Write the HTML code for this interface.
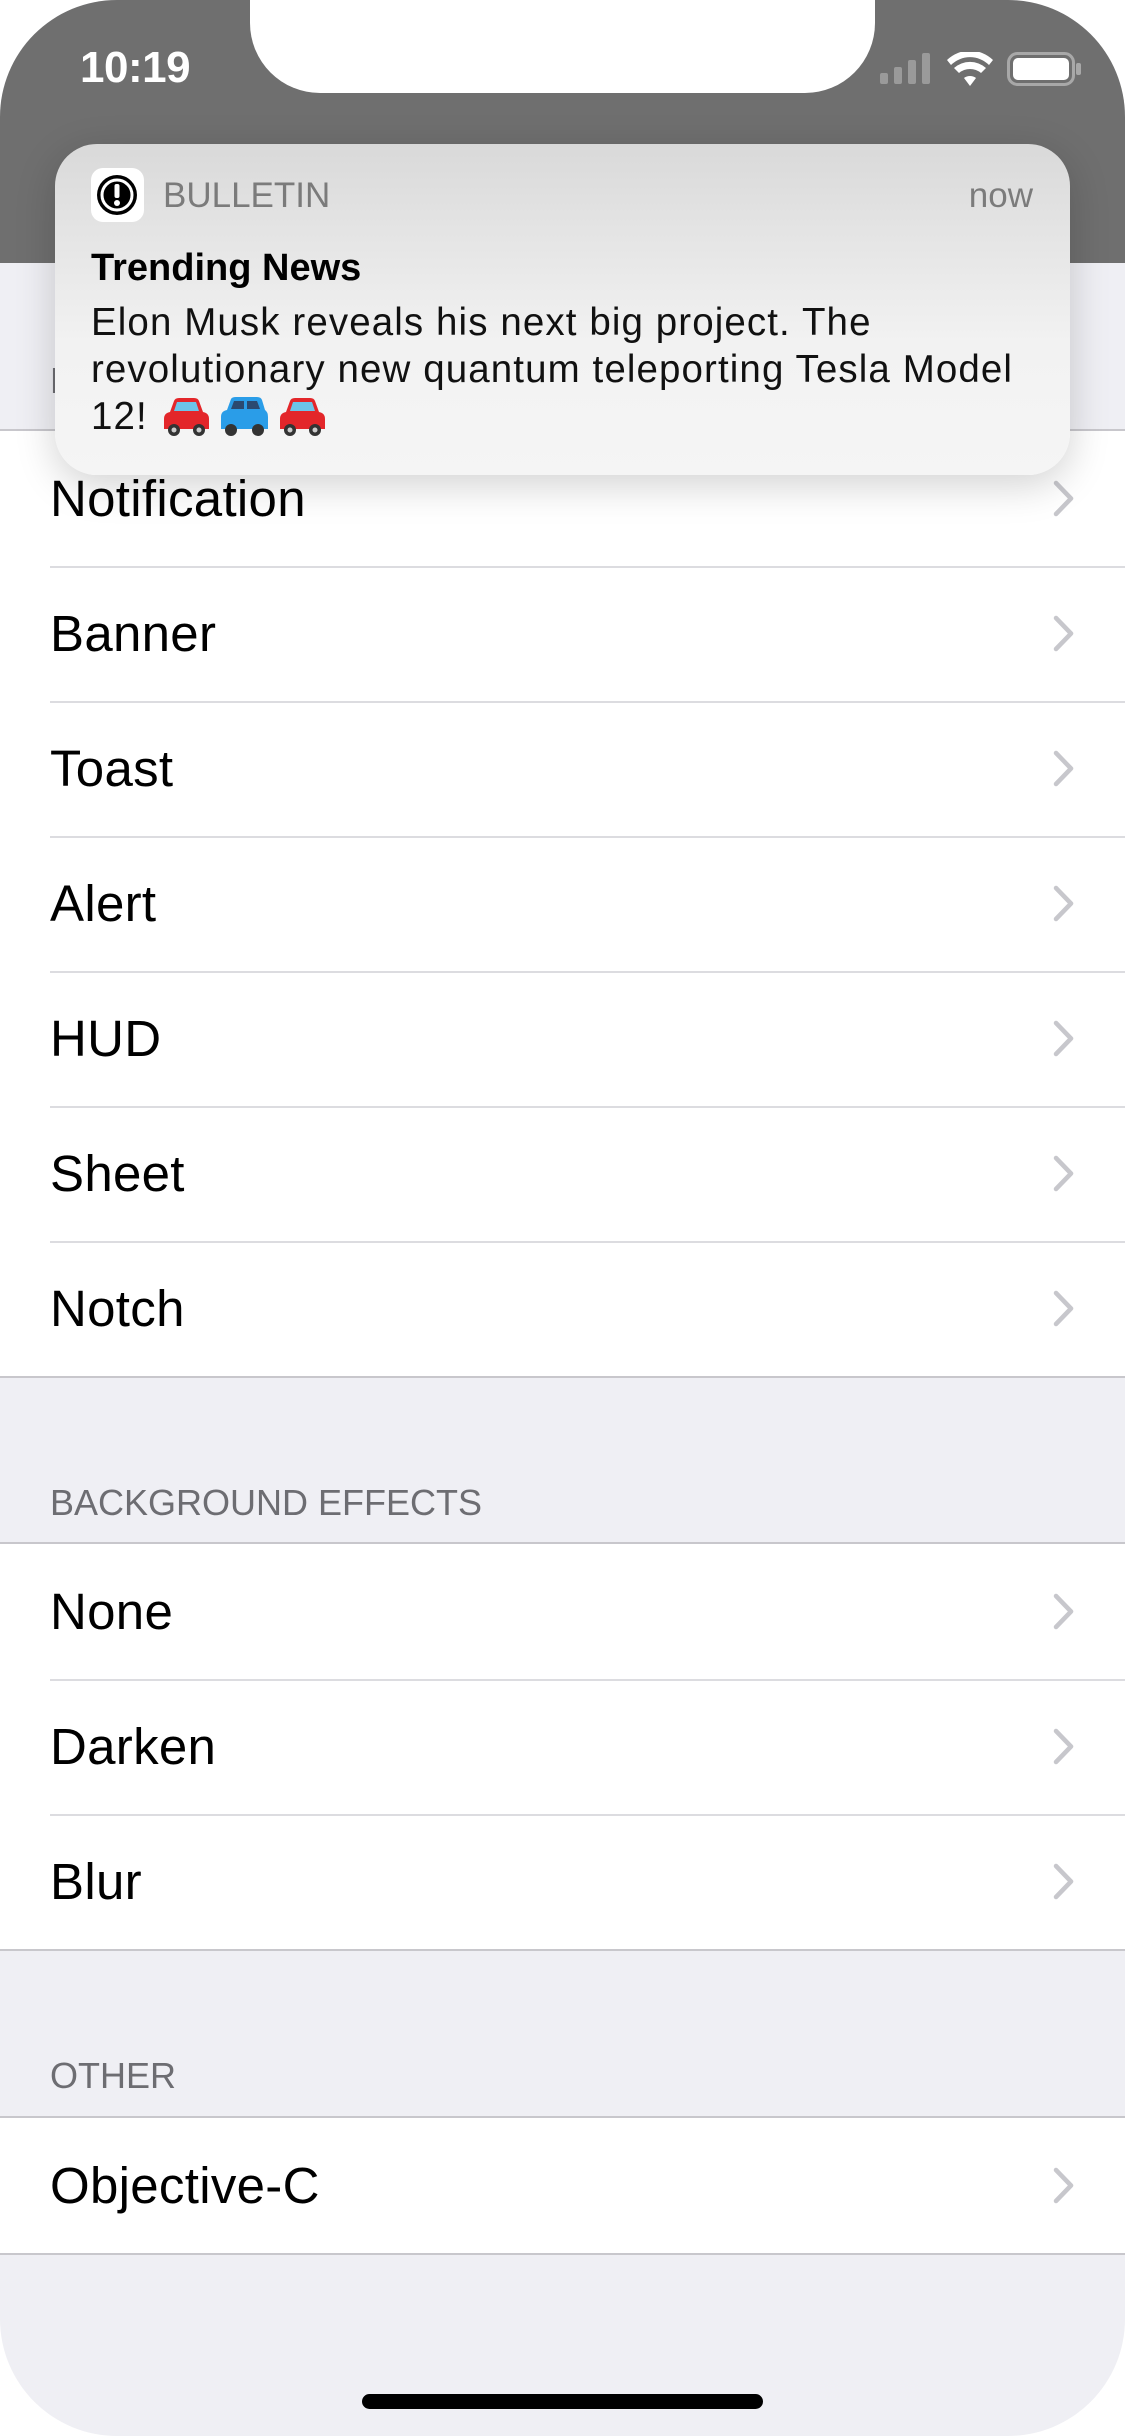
<!DOCTYPE html>
<html><head><meta charset="utf-8"><style>
*{margin:0;padding:0;box-sizing:border-box}
body{width:1125px;height:2436px;background:#fff;font-family:"Liberation Sans",sans-serif;overflow:hidden}
#s{position:absolute;left:0;top:0;width:1125px;height:2436px;border-radius:117px;overflow:hidden;background:#efeff4}
#hdr{position:absolute;left:0;top:0;width:1125px;height:263px;background:#6f6f6f}
#notch{position:absolute;left:250px;top:-2px;width:625px;height:95px;background:#fff;border-radius:0 0 70px 70px}
.time{position:absolute;left:80px;top:43px;color:#fff;font-size:44px;font-weight:bold;letter-spacing:-0.5px}
.grp{position:absolute;left:0;width:1125px;background:#fff;border-top:2px solid #c8c7cc;border-bottom:2px solid #c8c7cc}
.row{height:135px;position:relative;font-size:51px;color:#000;line-height:135px;padding-left:50px;letter-spacing:0.3px}
.row+.row:before{content:"";position:absolute;left:50px;right:0;top:0;border-top:2px solid #dcdce0}
.row svg{position:absolute;right:50px;top:49px}
.sh{position:absolute;left:50px;font-size:36px;color:#6d6d72}
#ban{position:absolute;left:55px;top:144px;width:1015px;height:331px;border-radius:42px;background:linear-gradient(#d9d9d9,#f2f2f2 60%,#f5f5f5);box-shadow:0 10px 40px rgba(0,0,0,.18)}
.body{position:absolute;left:36px;top:155px;width:980px;font-size:38.5px;line-height:47px;color:#111;white-space:nowrap;letter-spacing:1.1px}
</style></head><body><div id="s">
<div id="hdr"></div>
<div id="notch"></div>
<div class="time">10:19</div>
<svg style="position:absolute;left:880px;top:52px" width="52" height="32"><rect x="0" y="21" width="8" height="11" rx="2" fill="#9a9a9a"/><rect x="14" y="15" width="8" height="17" rx="2" fill="#9a9a9a"/><rect x="28" y="8" width="8" height="24" rx="2" fill="#9a9a9a"/><rect x="42" y="1" width="8" height="31" rx="2" fill="#9a9a9a"/></svg>
<svg style="position:absolute;left:946px;top:52px" width="48" height="34" viewBox="0 0 48 34"><path d="M24 34 L18 26 A10 10 0 0 1 30 26Z" fill="#fff"/><path d="M8 16 A24 24 0 0 1 40 16 L35 21 A17 17 0 0 0 13 21Z" fill="#fff"/><path d="M1 8 A33 33 0 0 1 47 8 L43 13 A27 27 0 0 0 5 13Z" fill="#fff"/></svg>
<svg style="position:absolute;left:1007px;top:52px" width="76" height="34"><rect x="1.5" y="1.5" width="65" height="31" rx="9" fill="none" stroke="#a8a8a8" stroke-width="3"/><rect x="6" y="6" width="56" height="22" rx="5" fill="#fff"/><rect x="69" y="11" width="5" height="12" rx="2" fill="#a8a8a8"/></svg>
<div class="sh" style="top:360px">PRESENTATION</div>
<div class="grp" style="top:429px">
<div class="row">Notification</div><div class="row">Banner</div><div class="row">Toast</div><div class="row">Alert</div><div class="row">HUD</div><div class="row">Sheet</div><div class="row">Notch</div>
</div>
<div class="sh" style="top:1482px">BACKGROUND EFFECTS</div>
<div class="grp" style="top:1542px">
<div class="row">None</div><div class="row">Darken</div><div class="row">Blur</div>
</div>
<div class="sh" style="top:2055px">OTHER</div>
<div class="grp" style="top:2116px">
<div class="row">Objective-C</div>
</div>
<div id="ban">
<div style="position:absolute;left:36px;top:24px;width:53px;height:54px;background:#fff;border-radius:12px"><svg width="53" height="54"><circle cx="26" cy="27" r="20" fill="#000"/><circle cx="26" cy="27" r="15" fill="none" stroke="#fff" stroke-width="3"/><rect x="23.5" y="16" width="5" height="14" rx="2" fill="#fff"/><circle cx="26" cy="35" r="3" fill="#fff"/></svg></div>
<div style="position:absolute;left:108px;top:32px;font-size:35px;color:#7b7b7b">BULLETIN</div>
<div style="position:absolute;right:37px;top:32px;font-size:35px;color:#7b7b7b">now</div>
<div style="position:absolute;left:36px;top:103px;font-size:38px;font-weight:bold;color:#000">Trending News</div>
<div class="body">Elon Musk reveals his next big project. The<br>revolutionary new quantum teleporting Tesla Model<br>12! <svg width="170" height="42" style="vertical-align:-8px">
<g id="c"><path d="M4 34 L4 24 Q4 18 10 17 L14 6 Q15 3 19 3 L34 3 Q38 3 39 6 L43 17 Q49 18 49 24 L49 34Z" fill="#e3262a"/><path d="M17 7 L36 7 L39 16 L14 16Z" fill="#6cc4e8"/><circle cx="14" cy="35" r="6" fill="#333"/><circle cx="39" cy="35" r="6" fill="#333"/><circle cx="14" cy="35" r="2.5" fill="#ccc"/><circle cx="39" cy="35" r="2.5" fill="#ccc"/></g>
<g transform="translate(57,0)"><path d="M4 34 L4 22 Q4 16 10 15 L14 4 Q15 2 19 2 L40 2 Q44 2 45 5 L48 15 Q51 17 51 22 L51 34Z" fill="#2a9de8"/><path d="M17 6 L27 6 L27 14 L14 14Z M30 6 L40 6 L43 14 L30 14Z" fill="#2b4a70"/><circle cx="14" cy="35" r="6" fill="#333"/><circle cx="41" cy="35" r="6" fill="#333"/></g>
<use href="#c" x="116"/></svg></div>
</div>
<div style="position:absolute;left:362px;top:2394px;width:401px;height:15px;border-radius:8px;background:#000"></div>
</div>
<script>
document.querySelectorAll('.row').forEach(function(r){r.insertAdjacentHTML('beforeend','<svg width="22" height="37" viewBox="0 0 22 37"><path d="M3 3 L18 18.5 L3 34" fill="none" stroke="#c7c7cc" stroke-width="4.5" stroke-linecap="round" stroke-linejoin="round"/></svg>')});
</script>
</body></html>
